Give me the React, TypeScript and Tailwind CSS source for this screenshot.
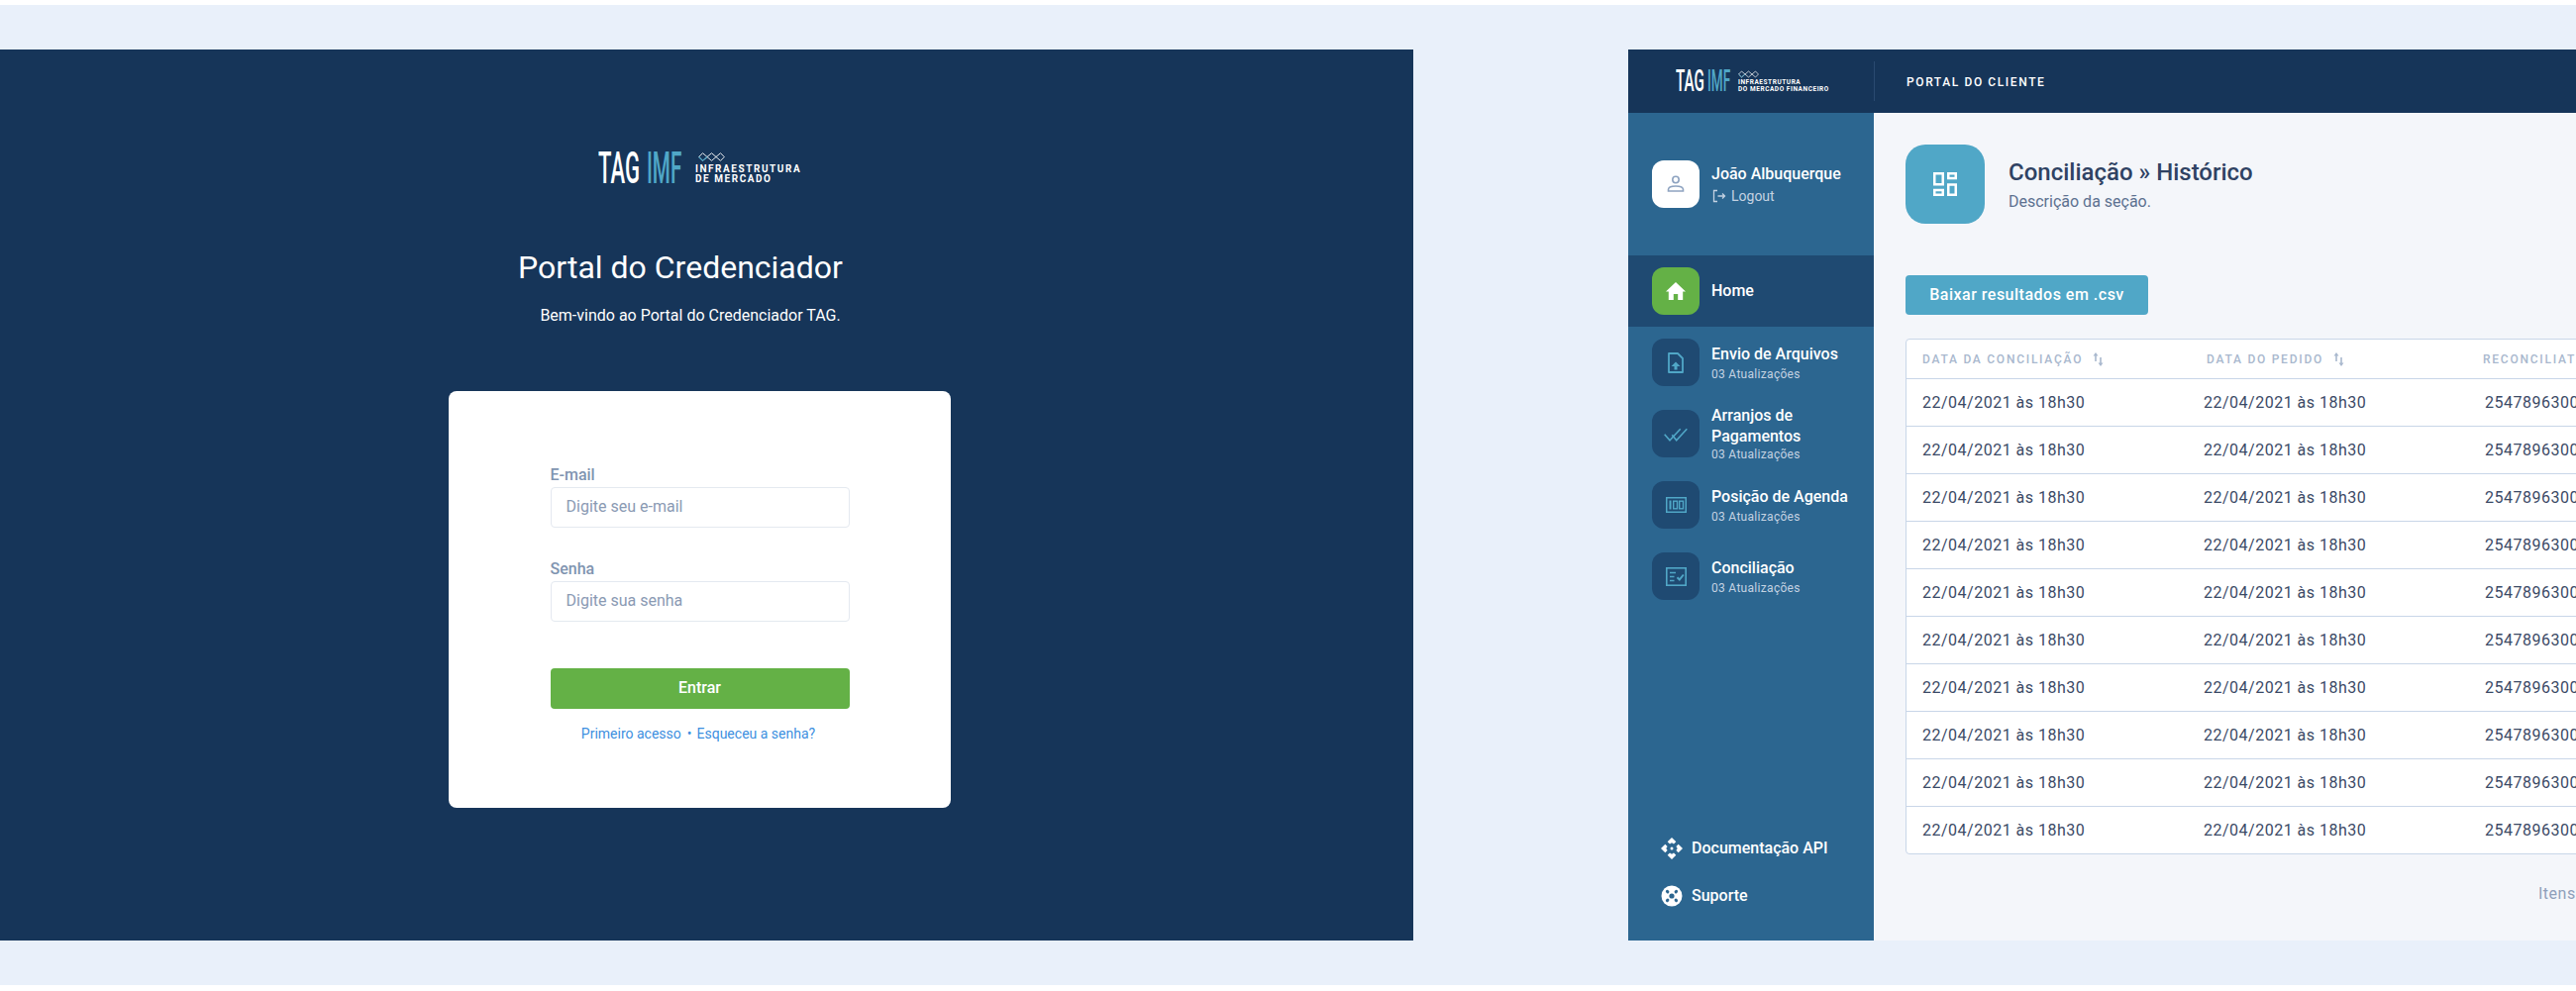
import type { ReactNode } from "react"

const Infinity3 = ({ className }: { className: string }) => (
  <svg viewBox="0 0 33 11" fill="none" className={className}>
    <path d="M.8 5.500L5.500.8 16.500 10.200 27.500.8 32.200 5.500 27.500 10.200 16.500.8 5.500 10.200z" stroke="white" strokeWidth="1.100" />
    <path d="M.8 5.500L5.500 10.200 11 5.500" stroke="#50a7c7" strokeWidth="1.300" />
  </svg>
)

const BigLogo = () => (
  <div className="flex h-[32px] w-[205px] items-stretch">
    <span className="w-[49px] origin-left scale-x-[0.49] whitespace-nowrap text-[45px] leading-[32px] font-medium text-white">TAG</span>
    <span className="w-[49px] origin-left scale-x-[0.46] whitespace-nowrap text-[45px] leading-[32px] font-medium text-[#50a7c7]">IMF</span>
    <div className="flex flex-col">
      <Infinity3 className="h-[11px] w-[33px]" />
      <div className="mt-[3px] whitespace-nowrap text-[10px] leading-[10px] font-bold tracking-[1.55px] text-white">INFRAESTRUTURA</div>
      <div className="whitespace-nowrap text-[10px] leading-[10px] font-bold tracking-[1.55px] text-white">DE MERCADO</div>
    </div>
  </div>
)

const SmallLogo = () => (
  <div className="flex h-[22px] w-[153px] items-stretch">
    <span className="w-[32px] origin-left scale-x-[0.49] whitespace-nowrap text-[31px] leading-[22px] font-medium text-white">TAG</span>
    <span className="w-[31px] origin-left scale-x-[0.44] whitespace-nowrap text-[31px] leading-[22px] font-medium text-[#50a7c7]">IMF</span>
    <div className="flex flex-col">
      <Infinity3 className="h-[8px] w-[21px]" />
      <div className="mt-px whitespace-nowrap text-[6.5px] leading-[6.5px] font-bold tracking-[0.55px] text-white">INFRAESTRUTURA</div>
      <div className="whitespace-nowrap text-[6.5px] leading-[6.5px] font-bold tracking-[0.55px] text-white">DO MERCADO FINANCEIRO</div>
    </div>
  </div>
)

const Tile = ({ children, bg = "bg-[#1f4a72]" }: { children: ReactNode; bg?: string }) => (
  <div className={`flex h-12 w-12 shrink-0 items-center justify-center rounded-xl ${bg}`}>{children}</div>
)

const UploadIcon = () => (
  <svg width="24" height="24" viewBox="0 0 24 24" fill="none">
    <path d="M5 3h9l5 5v14H5z" stroke="#50a7c7" strokeWidth="1.800" strokeLinejoin="round" />
    <path d="M12 11.500l4.500 4.500h-3v3.500h-3V16h-3z" fill="#50a7c7" />
  </svg>
)

const ChecksIcon = () => (
  <svg width="24" height="24" viewBox="0 0 24 24" fill="none" stroke="#50a7c7" strokeWidth="1.600">
    <path d="M.7 12.700L6 18.700 16.700 7.300" />
    <path d="M8.300 13.300l4.400 5.400L23.300 7.300" />
  </svg>
)

const AgendaIcon = () => (
  <svg width="24" height="24" viewBox="0 0 24 24" fill="none" stroke="#50a7c7">
    <rect x="2.750" y="4.750" width="19.500" height="14.500" strokeWidth="1.500" />
    <path d="M6.500 7.500v9" strokeWidth="2" />
    <rect x="9.700" y="8.200" width="3.800" height="7.600" strokeWidth="1.400" />
    <rect x="15.700" y="8.200" width="3.800" height="7.600" strokeWidth="1.400" />
  </svg>
)

const ReconcileIcon = () => (
  <svg width="24" height="24" viewBox="0 0 24 24" fill="none" stroke="#50a7c7" strokeWidth="1.600">
    <rect x="2.800" y="3.800" width="19.400" height="17.400" />
    <path d="M6 8.500h6M6 12.500h4.500M6 16.500h4.500" />
    <path d="M13.500 13.200l2.300 2.300 4-5" strokeWidth="2" />
  </svg>
)

const navItems = [
  { title: ["Envio de Arquivos"], icon: <UploadIcon /> },
  { title: ["Arranjos de", "Pagamentos"], icon: <ChecksIcon /> },
  { title: ["Posição de Agenda"], icon: <AgendaIcon /> },
  { title: ["Conciliação"], icon: <ReconcileIcon /> },
]

const SortIcon = () => (
  <svg width="11" height="14" viewBox="0 0 11 14" fill="#a9b8ce" className="ml-2.5">
    <path d="M3 0l2.500 3.500H3.800V9H2.200V3.500H.5z" />
    <path d="M8 14l2.500-3.500H8.800V5H7.200v5.500H5.500z" />
  </svg>
)

const Login = () => (
  <div className="flex w-[1427px] flex-col items-center bg-[#163559] pt-[104px] pr-[14px]">
    <BigLogo />
    <h1 className="mt-[64px] mr-[39px] text-[32px] leading-[40px] font-normal text-white">Portal do Credenciador</h1>
    <p className="mt-[17px] mr-[19px] text-base leading-6 text-white">Bem-vindo ao Portal do Credenciador TAG.</p>
    <div className="mt-[64px] flex h-[421px] w-[507px] flex-col items-center rounded-lg bg-white pt-[73px]">
      <div className="flex w-[302px] flex-col">
        <label className="text-base leading-6 font-medium text-[#8094b0]">E-mail</label>
        <input placeholder="Digite seu e-mail" className="h-[41px] rounded border border-[#e4e9f0] bg-white px-[15px] pb-0.5 text-base outline-none placeholder:text-[#8a9ab3]" />
        <label className="mt-[30px] text-base leading-6 font-medium text-[#8094b0]">Senha</label>
        <input placeholder="Digite sua senha" className="h-[41px] rounded border border-[#e4e9f0] bg-white px-[15px] pb-0.5 text-base outline-none placeholder:text-[#8a9ab3]" />
        <button className="mt-[47px] h-[41px] rounded bg-[#64b146] pb-0.5 text-base font-medium text-white">Entrar</button>
        <div className="mt-[15px] mr-[3px] flex justify-center text-sm leading-5 text-[#3d8fe0]">
          <a>Primeiro acesso</a>
          <span className="mr-[5px] ml-1.5">•</span>
          <a>Esqueceu a senha?</a>
        </div>
      </div>
    </div>
  </div>
)

const Sidebar = () => (
  <aside className="flex w-[248px] shrink-0 flex-col bg-[#2c6690]">
    <div className="flex items-center gap-3 px-6 pt-12 pb-12">
      <div className="flex h-12 w-12 items-center justify-center rounded-xl bg-white">
        <svg width="24" height="24" viewBox="0 0 24 24" fill="none" stroke="#8ea3c0" strokeWidth="1.600">
          <circle cx="12" cy="7.500" r="3.200" />
          <path d="M4.500 19v-1.500c0-2 2.500-3.500 7.500-3.500s7.500 1.500 7.500 3.500V19z" />
        </svg>
      </div>
      <div>
        <div className="text-base leading-6 font-medium text-white">João Albuquerque</div>
        <div className="flex items-center gap-1 text-sm leading-5 text-[#c4d2e2]">
          <svg width="16" height="16" viewBox="0 0 16 16" fill="none" stroke="#c4d2e2" strokeWidth="1.300">
            <path d="M6 2.500H2.500v11H6" />
            <path d="M6.500 8h7M11 5.500L13.500 8 11 10.500" />
          </svg>
          <span>Logout</span>
        </div>
      </div>
    </div>

    <div className="flex h-[72px] items-center gap-3 bg-[#1f4a72] px-6">
      <Tile bg="bg-[#64b146]">
        <svg width="22" height="20" viewBox="0 0 22 20" fill="white">
          <path d="M11 1L1 10.500h2.800V19h5v-6h4.400v6h5v-8.500H21z" />
        </svg>
      </Tile>
      <span className="text-base font-medium text-white">Home</span>
    </div>

    <nav className="flex flex-col gap-6 px-6 pt-3">
      {navItems.map((item) => (
        <div key={item.title[0]} className="flex h-12 items-center gap-3">
          <Tile>{item.icon}</Tile>
          <div className={item.title.length > 1 ? "mt-px whitespace-nowrap" : "mt-[3px] whitespace-nowrap"}>
            {item.title.map((line) => (
              <div key={line} className="text-base leading-[21px] font-medium text-white">{line}</div>
            ))}
            <div className={item.title.length > 1 ? "text-xs leading-[17px] tracking-[0.3px] text-[#c4d2e2]" : "text-xs leading-[21px] tracking-[0.3px] text-[#c4d2e2]"}>03 Atualizações</div>
          </div>
        </div>
      ))}
    </nav>

    <div className="mt-auto flex flex-col gap-6 pb-[33px] pl-[33px]">
      <div className="flex h-6 items-center gap-[9px] text-base font-medium text-white">
        <svg width="22" height="22" viewBox="0 0 22 22" fill="white">
          <path d="M11 0l4.300 4.300-2.300 2.300-2-1.300-2 1.300-2.300-2.300z" />
          <path d="M11 22l4.300-4.300-2.300-2.300-2 1.300-2-1.300-2.300 2.300z" />
          <path d="M0 11l4.300-4.300 2.300 2.300-1.300 2 1.300 2-2.300 2.300z" />
          <path d="M22 11l-4.300-4.300-2.300 2.300 1.300 2-1.300 2 2.300 2.300z" />
          <circle cx="11" cy="11" r="1.500" />
        </svg>
        <span>Documentação API</span>
      </div>
      <div className="flex h-6 items-center gap-[9px] text-base font-medium text-white">
        <svg width="22" height="22" viewBox="0 0 22 22">
          <circle cx="11" cy="11" r="10.500" fill="white" />
          <circle cx="11" cy="11" r="2.600" fill="#2c6690" />
          <path d="M6.400 6.400l.5.5M15.600 6.400l-.5.5M6.400 15.600l.5-.5M15.600 15.600l-.5-.5" stroke="#2c6690" strokeWidth="3" strokeLinecap="round" />
        </svg>
        <span>Suporte</span>
      </div>
    </div>
  </aside>
)

const rows = Array.from({ length: 10 }, (_, i) => i)

const Portal = () => (
  <div className="flex flex-1 flex-col overflow-hidden">
    <header className="flex h-16 shrink-0 items-center bg-[#163559]">
      <div className="flex h-full w-[248px] shrink-0 items-center pl-12">
        <SmallLogo />
      </div>
      <div className="h-10 w-px bg-[#2a4a70]" />
      <div className="mt-0.5 pl-8 text-xs font-medium tracking-[1.6px] text-white">PORTAL DO CLIENTE</div>
    </header>
    <div className="flex min-h-0 flex-1">
      <Sidebar />
      <main className="min-w-0 flex-1 bg-[#f4f6fa] pt-8 pl-8">
        <div className="flex items-center gap-6">
          <div className="flex h-20 w-20 items-center justify-center rounded-[20px] bg-[#50a7c7]">
            <svg width="24" height="24" viewBox="0 0 24 24" fill="none" stroke="white" strokeWidth="2.500">
              <rect x="1.250" y="1.250" width="8.500" height="11" />
              <rect x="15.250" y="1.250" width="7.500" height="4.800" />
              <rect x="1.250" y="18" width="8.500" height="4.750" />
              <rect x="15.250" y="12.500" width="7.500" height="10.250" />
            </svg>
          </div>
          <div className="mt-[2px]">
            <h2 className="text-2xl leading-8 font-medium text-[#2f4263]">Conciliação » Histórico</h2>
            <p className="mt-0.5 text-base leading-6 text-[#5d7190]">Descrição da seção.</p>
          </div>
        </div>

        <button className="mt-[52px] flex h-10 w-[245px] items-center justify-center rounded bg-[#50a7c7] text-base font-medium tracking-[0.5px] text-white">
          Baixar resultados em .csv
        </button>

        <div className="mt-6 w-[900px] rounded-l border border-[#c9d6e8] bg-white">
          <div className="flex h-[39px] items-center pl-4 text-xs font-medium tracking-[1.75px] whitespace-nowrap text-[#a9b8ce]">
            <div className="flex w-[287px] items-center">DATA DA CONCILIAÇÃO<SortIcon /></div>
            <div className="flex w-[279px] items-center">DATA DO PEDIDO<SortIcon /></div>
            <div>RECONCILIATION ID</div>
          </div>
          {rows.map((row) => (
            <div key={row} className="flex h-12 items-center border-t border-[#c9d6e8] pl-4 text-base tracking-[0.5px] text-[#3b4a66]">
              <div className="w-[284px]">22/04/2021 às 18h30</div>
              <div className="w-[284px]">22/04/2021 às 18h30</div>
              <div>254789630000</div>
            </div>
          ))}
        </div>

        <div className="mt-[28px] ml-[639px] text-base leading-6 tracking-[0.5px] whitespace-nowrap text-[#8fa0ba]">Itens por página</div>
      </main>
    </div>
  </div>
)

export default function App() {
  return (
    <div className="h-[1001px] w-full overflow-hidden bg-white pt-[5px] font-['Roboto',sans-serif]">
      <div className="flex h-[990px] gap-[217px] bg-[#e9f0fa] py-[45px]">
        <Login />
        <Portal />
      </div>
    </div>
  )
}
